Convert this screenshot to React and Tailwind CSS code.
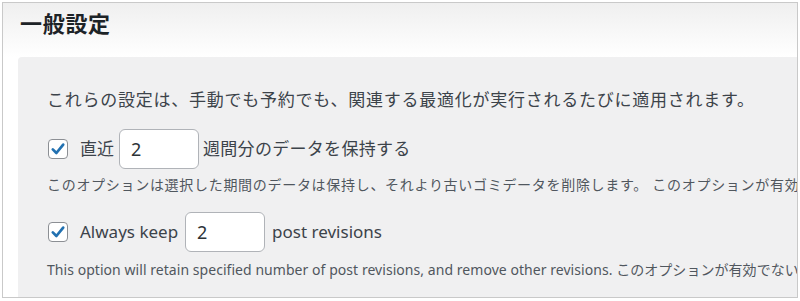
export default function App() {
  const font = { fontFamily: '"Noto Sans", "Noto Sans CJK JP", sans-serif' };
  const Check = () => (
    <span className="flex h-[20px] w-[20px] shrink-0 items-center justify-center rounded-[4px] border border-[#8c8f94] bg-white">
      <svg width="16" height="16" viewBox="0 0 20 20">
        <path d="M3.5 10.5 L8 15 L16.5 4.5" fill="none" stroke="#2271b1" strokeWidth="3.4" strokeLinecap="round" strokeLinejoin="round" />
      </svg>
    </span>
  );
  const Input = () => (
    <span className="flex h-[40px] w-[80px] shrink-0 items-center rounded-[6px] border border-[#b0b3b8] bg-white pl-[11px] text-[18px] text-[#2c3338]">
      2
    </span>
  );
  return (
    <div className="h-[301px] w-[800px] overflow-hidden bg-white" style={font}>
      <div className="mx-[2px] mt-[2px] flex h-[296px] flex-col overflow-hidden border border-[#c9c9c9]">
        <div className="flex h-[54px] shrink-0 items-start bg-gradient-to-b from-[#efefef] to-white pl-[17px] pt-[5px]">
          <h1 className="text-[22px] leading-[30px] font-bold tracking-[0.7px] text-[#1d2327]">一般設定</h1>
        </div>
        <div className="ml-[15px] flex-1 rounded-tl-[4px] bg-[#f0f0f1] pl-[29px] pt-[31px] whitespace-nowrap">
          <p className="text-[17px] leading-[24px] text-[#3c434a] tracking-[0.75px]">
            これらの設定は、手動でも予約でも、関連する最適化が実行されるたびに適用されます。
          </p>
          <div className="mt-[17px] flex h-[40px] items-center text-[17px] text-[#3c434a]">
            <span className="ml-[1px]"><Check /></span>
            <span className="ml-[12px] mr-[5px]">直近</span>
            <Input />
            <span className="ml-[4px] tracking-[0.3px]">週間分のデータを保持する</span>
          </div>
          <p className="mt-[6px] text-[14px] leading-[20px] text-[#50575e] tracking-[0.7px]">
            このオプションは選択した期間のデータは保持し、それより古いゴミデータを削除します。 このオプションが有効でない場合は、すべてのデータが削除されます。
          </p>
          <div className="mt-[17px] flex h-[40px] items-center text-[17px] text-[#3c434a]">
            <span className="ml-[1px]"><Check /></span>
            <span className="ml-[12px] mr-[7px]">Always keep</span>
            <Input />
            <span className="ml-[7px]">post revisions</span>
          </div>
          <p className="mt-[8px] text-[14px] leading-[20px] text-[#50575e] tracking-[0.05px]">
            This option will retain specified number of post revisions, and remove other revisions. このオプションが有効でない場合は、すべてのリビジョンが削除されます。
          </p>
        </div>
      </div>
    </div>
  );
}
